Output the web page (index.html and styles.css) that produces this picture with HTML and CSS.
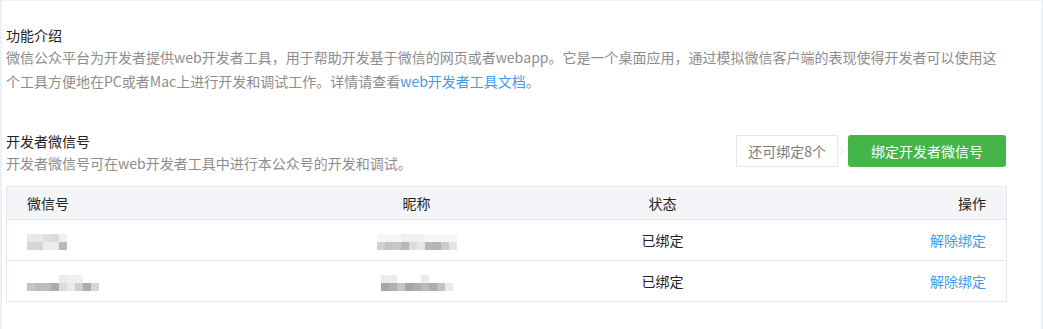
FILE: index.html
```html
<!DOCTYPE html>
<html lang="zh-CN">
<head>
    <meta charset="UTF-8">
    <meta name="viewport" content="width=device-width, initial-scale=1.0">
    <title>开发者工具</title>
    <link rel="stylesheet" href="styles.css">
</head>
<body>
    <div class="panel">
        <div class="section intro">
            <h3 class="section-title">功能介绍</h3>
            <p class="section-desc">微信公众平台为开发者提供web开发者工具，用于帮助开发基于微信的网页或者webapp。它是一个桌面应用，通过模拟微信客户端的表现使得开发者可以使用这个工具方便地在PC或者Mac上进行开发和调试工作。详情请查看<a class="link" href="#">web开发者工具文档</a>。</p>
        </div>

        <div class="section devs">
            <div class="section-head">
                <div>
                    <h3 class="section-title">开发者微信号</h3>
                    <p class="section-desc">开发者微信号可在web开发者工具中进行本公众号的开发和调试。</p>
                </div>
                <div class="actions">
                    <span class="tip">还可绑定8个</span>
                    <button class="btn-green">绑定开发者微信号</button>
                </div>
            </div>

            <table class="dev-table">
                <colgroup>
                    <col class="c-id">
                    <col class="c-nick">
                    <col class="c-state">
                    <col class="c-op">
                </colgroup>
                <thead>
                    <tr>
                        <th class="t-left">微信号</th>
                        <th>昵称</th>
                        <th>状态</th>
                        <th class="t-right">操作</th>
                    </tr>
                </thead>
                <tbody>
                    <tr>
                        <td class="t-left"><span class="blur blur-a"></span></td>
                        <td><span class="blur blur-b"></span></td>
                        <td>已绑定</td>
                        <td class="t-right"><a class="link" href="#">解除绑定</a></td>
                    </tr>
                    <tr>
                        <td class="t-left"><span class="blur blur-c"></span></td>
                        <td><span class="blur blur-d"></span></td>
                        <td>已绑定</td>
                        <td class="t-right"><a class="link" href="#">解除绑定</a></td>
                    </tr>
                </tbody>
            </table>
        </div>
    </div>
</body>
</html>
```

FILE: styles.css
```css
body {
    margin: 0;
    background-color: #edf0f7;
    font-family: "Microsoft YaHei", "Noto Sans CJK SC", sans-serif;
    font-size: 14px;
    font-kerning: none;
    color: #222;
}
.panel {
    margin: 1px 0 0 2px;
    width: 1039px;
    height: 328px;
    box-sizing: border-box;
    padding: 24px 35px 0 4px;
    background-color: #fff;
}
.section-title {
    margin: 0;
    font-size: 14px;
    font-weight: normal;
    line-height: 20px;
    color: #222;
}
.section-desc {
    margin: 0;
    line-height: 24px;
    color: #8d8d8d;
}
.link {
    color: #459ae9;
    text-decoration: none;
}
.devs {
    margin-top: 38px;
}
.section-head {
    display: flex;
    align-items: center;
    justify-content: space-between;
    margin-bottom: 11px;
}
.actions {
    display: flex;
    align-items: center;
    margin-top: -4px;
}
.tip {
    position: relative;
    display: inline-block;
    height: 30px;
    line-height: 30px;
    padding: 0 11px 0 11px;
    border: 1px solid #e4e8eb;
    color: #7b7b7b;
    background: #fff;
}
.tip::before,
.tip::after {
    content: "";
    position: absolute;
    top: 50%;
    border-style: solid;
    border-color: transparent;
}
.tip::before {
    right: -7px;
    margin-top: -6px;
    border-width: 6px 0 6px 6px;
    border-left-color: #e4e8eb;
}
.tip::after {
    right: -6px;
    margin-top: -5px;
    border-width: 5px 0 5px 5px;
    border-left-color: #fff;
}
.btn-green {
    margin-left: 10px;
    width: 158px;
    height: 32px;
    border: 0;
    border-radius: 3px;
    background-color: #44b549;
    color: #fff;
    font-family: inherit;
    font-size: 14px;
    cursor: pointer;
}
.dev-table {
    width: 1000px;
    border-collapse: collapse;
    table-layout: fixed;
    border: 1px solid #e4e8eb;
}
.c-id { width: 260px; }
.c-nick { width: 300px; }
.c-state { width: 192px; }
.c-op { width: 248px; }
.dev-table th,
.dev-table td {
    padding: 0 20px;
    text-align: center;
    font-weight: normal;
    border-bottom: 1px solid #e4e8eb;
}
.dev-table th {
    height: 32px;
    background-color: #f4f5f9;
}
.dev-table td {
    height: 40px;
}
.dev-table .t-left { text-align: left; }
.dev-table .t-right { text-align: right; }

/* pixelated (hidden) values */
.blur {
    display: inline-block;
    height: 16px;
    vertical-align: middle;
    background-repeat: no-repeat;
    background-size: 100% 8px, 100% 8px;
    background-position: 0 0, 0 8px;
}
.blur-a {
    width: 40px;
    background-image:
        linear-gradient(to right, #e8e8e8 0 16px, #dfdfdc 16px 24px, #d8dce0 24px 32px, #eff0f0 32px 40px),
        linear-gradient(to right, #d5d5d5 0 16px, #ececec 16px 24px, #ebebeb 24px 32px, #b8b8b8 32px 40px);
}
.blur-b {
    width: 80px;
    background-image:
        linear-gradient(to right, #f6f6f6 0 24px, #f2eeea 24px 32px, #eef0f2 32px 48px, #f6f6f6 48px 80px),
        linear-gradient(to right, #d3cfcc 0 8px, #c9c3be 8px 16px, #c8c8cc 16px 24px, #bcb7b0 24px 32px, #d8dde2 32px 40px, #e6e6e4 40px 48px, #b8b6b6 48px 56px, #b4b3b3 56px 64px, #cccccc 64px 72px, #e4e4e4 72px 80px);
}
.blur-c {
    width: 72px;
    background-image:
        linear-gradient(to right, transparent 0 32px, #ebebeb 32px 40px, #f0efed 40px 56px, transparent 56px),
        linear-gradient(to right, #c8c4c2 0 8px, #c4bab4 8px 16px, #b8bec4 16px 24px, #b0acab 24px 32px, #d8dce0 32px 40px, #ebebe9 40px 48px, #d0d0ce 48px 56px, #b0acac 56px 64px, #d4d6d8 64px 72px);
}
.blur-d {
    width: 72px;
    background-image:
        linear-gradient(to right, #eeecea 0 16px, transparent 16px 40px, #ececec 40px 48px, transparent 48px),
        linear-gradient(to right, #aaa6a6 0 8px, #b4b0a8 8px 16px, #c4c4c8 16px 24px, #a8a4a4 24px 32px, #b0acb4 32px 40px, #bcbcbc 40px 48px, #aeaaae 48px 56px, #cac0b4 56px 64px, #e4eaf2 64px 72px);
}
```
